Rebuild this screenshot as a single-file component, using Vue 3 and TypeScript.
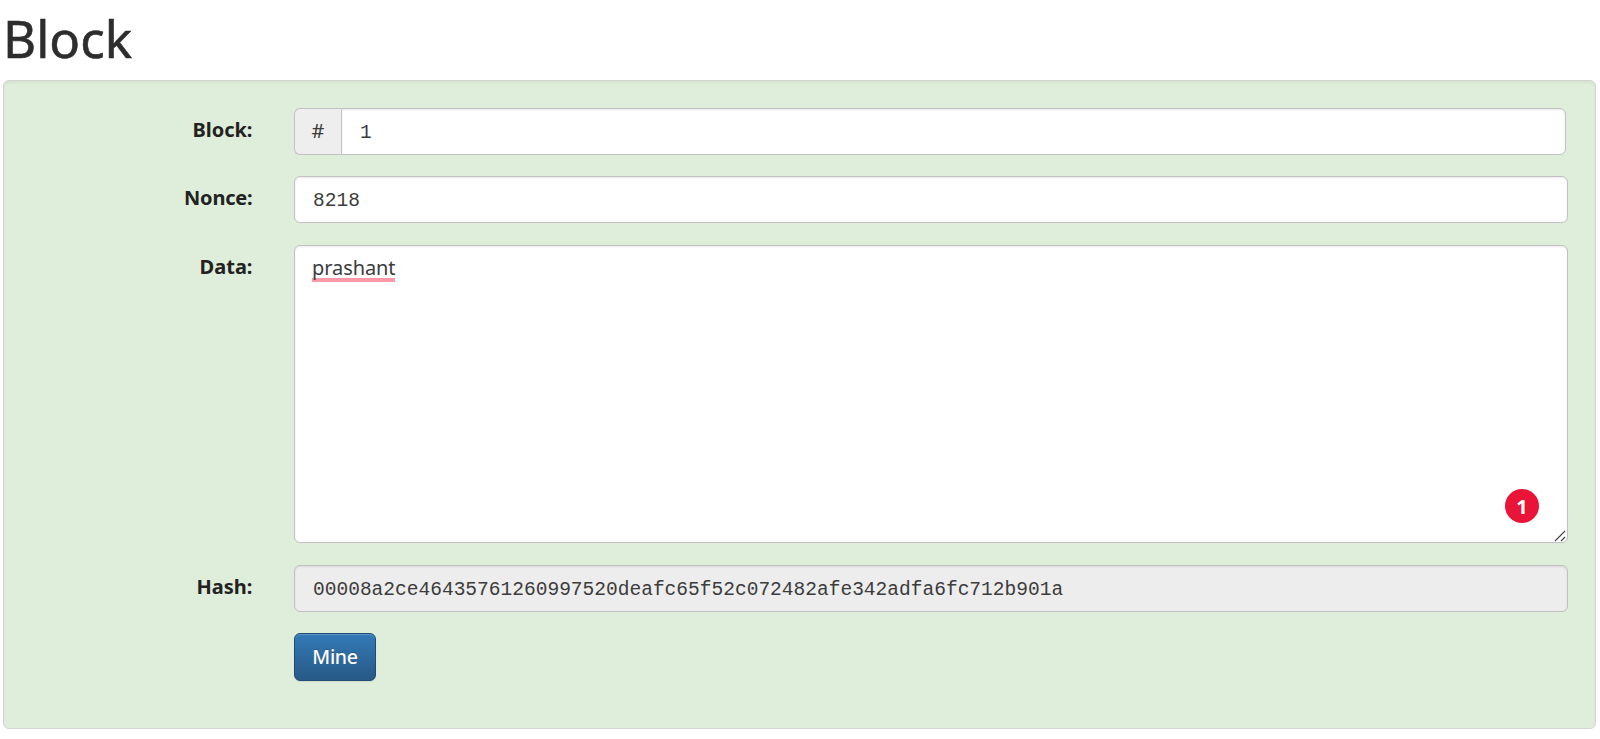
<script setup lang="ts">
interface Block {
  number: string
  nonce: string
  data: string
  hash: string
}

const block: Block = {
  number: '1',
  nonce: '8218',
  data: 'prashant',
  hash: '00008a2ce46435761260997520deafc65f52c072482afe342adfa6fc712b901a',
}
const issues = 1
</script>

<template>
  <main class="page">
    <h1>Block</h1>
    <section class="well">
      <div class="row">
        <span class="label">Block:</span>
        <div class="group">
          <span class="addon">#</span>
          <div class="field number mono">{{ block.number }}</div>
        </div>
      </div>
      <div class="row">
        <span class="label nonce">Nonce:</span>
        <div class="field mono">{{ block.nonce }}</div>
      </div>
      <div class="row tall">
        <span class="label">Data:</span>
        <div class="field area">
          <span class="misspelled">{{ block.data }}</span>
          <span class="badge">{{ issues }}</span>
          <svg class="grip" width="12" height="12" viewBox="0 0 12 12">
            <path d="M1 11 11 1M7 11l4-4" fill="none" stroke="#444" stroke-width="1.1" />
          </svg>
        </div>
      </div>
      <div class="row">
        <span class="label">Hash:</span>
        <div class="field mono readonly">{{ block.hash }}</div>
      </div>
      <div class="row">
        <span class="label"></span>
        <button type="button" class="mine">Mine</button>
      </div>
    </section>
  </main>
</template>

<style>
body {
  background: #fff;
}
</style>

<style scoped>
.page {
  box-sizing: border-box;
  height: 739px;
  padding: 0 4px 0 3px;
  font-family: "Noto Sans", "Open Sans", sans-serif;
  font-size: 20px;
  color: #222;
  overflow: hidden;
}
h1 {
  margin: 0;
  height: 80px;
  box-sizing: border-box;
  font-size: 51px;
  line-height: 76px;
  font-weight: 400;
  color: #2d2d2d;
  -webkit-text-stroke: 0.6px #2d2d2d;
}
.well {
  box-sizing: border-box;
  height: 649px;
  padding: 27px 27px 0 0;
  border: 1px solid #d3d5d1;
  border-radius: 6px;
  background: #dfeeda;
  box-shadow: inset 0 2px 3px rgba(0, 0, 0, 0.05);
}
.row {
  display: flex;
  height: 47px;
  margin-bottom: 21.4px;
}
.row.tall {
  height: 298.4px;
}
.label {
  flex: none;
  width: 248.5px;
  margin-right: 41.5px;
  text-align: right;
  font-weight: 700;
  line-height: 43px;
}
.nonce {
  letter-spacing: -0.2px;
}
.field {
  box-sizing: border-box;
  flex: 1;
  padding: 0 18px;
  border: 1px solid #c2c0c4;
  border-radius: 6px;
  background: #fff;
  box-shadow: inset 0 1px 2px rgba(0, 0, 0, 0.09);
  line-height: 49px;
  color: #3c3c3c;
}
.mono {
  font-family: "Liberation Mono", monospace;
  font-size: 19.55px;
}
.group {
  display: flex;
  flex: 1;
  margin-right: 2px;
}
.addon {
  box-sizing: border-box;
  flex: none;
  width: 47px;
  border: 1px solid #c2c0c4;
  border-right: 0;
  border-radius: 6px 0 0 6px;
  background: #eee;
  text-align: center;
  line-height: 44px;
  color: #3c3c3c;
}
.number {
  border-radius: 0 6px 6px 0;
  line-height: 48px;
}
.area {
  position: relative;
  padding-left: 17px;
  line-height: 44px;
}
.misspelled {
  display: block;
  width: max-content;
  height: 36px;
  box-sizing: border-box;
  border-bottom: 4px solid #ff97a7;
  line-height: 44px;
  letter-spacing: -0.08px;
}
.badge {
  position: absolute;
  right: 28px;
  bottom: 19px;
  width: 34px;
  height: 34px;
  border-radius: 50%;
  background: #ea1438;
  color: #fff;
  font-weight: 700;
  line-height: 35px;
  text-align: center;
}
.grip {
  position: absolute;
  right: 1px;
  bottom: 0;
}
.readonly {
  background: #ededed;
}
.mine {
  box-sizing: border-box;
  width: 82px;
  height: 48px;
  padding: 0;
  border: 1px solid #1d4b78;
  border-radius: 6px;
  background: linear-gradient(#337ab7, #275985);
  box-shadow: inset 0 1px 0 rgba(255, 255, 255, 0.2), 0 1px 1px rgba(0, 0, 0, 0.08);
  color: #fff;
  font: 500 19.5px/44px "Noto Sans", "Open Sans", sans-serif;
  letter-spacing: -0.3px;
  text-shadow: 0 -1px 0 rgba(0, 0, 0, 0.2);
}
</style>
